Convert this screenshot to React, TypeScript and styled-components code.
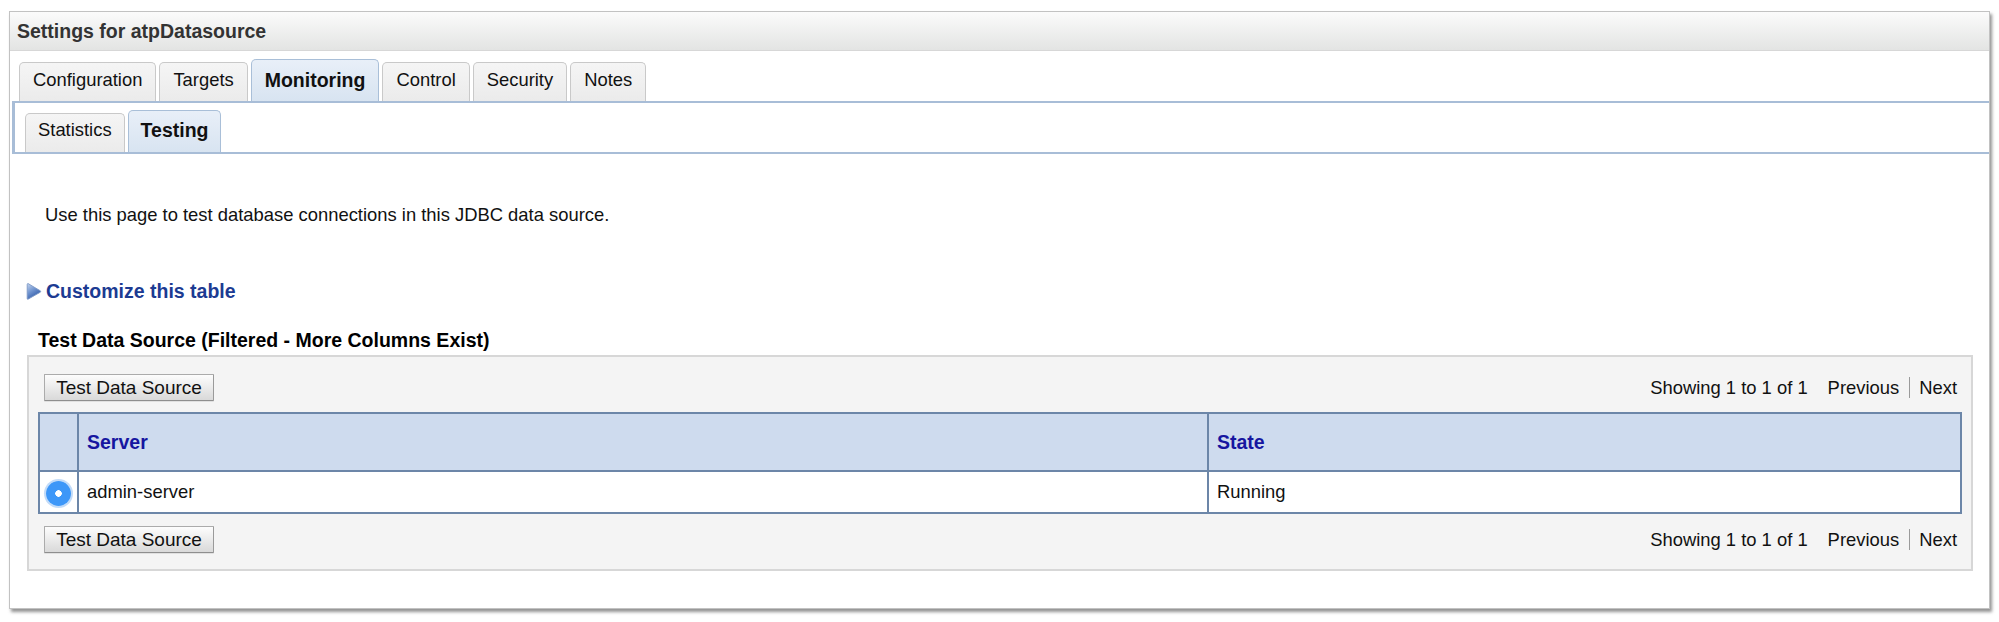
import styled, { createGlobalStyle } from "styled-components";

const GlobalStyle = createGlobalStyle`
  html, body {
    margin: 0;
    padding: 0;
    background: #ffffff;
  }
  body {
    font-family: Tahoma, "Liberation Sans", Arial, sans-serif;
    color: #111;
  }
`;

const Page = styled.div`
  padding: 11px 0 16px 9px;
`;

const Panel = styled.section`
  width: 1981px;
  box-sizing: border-box;
  border: 1px solid #c2c2c2;
  background: #fff;
  box-shadow: 2px 3px 3px rgba(60, 60, 60, 0.55);
  padding-bottom: 37px;
`;

const PanelHeader = styled.header`
  height: 39px;
  box-sizing: border-box;
  display: flex;
  align-items: center;
  padding-left: 7px;
  background: linear-gradient(#fbfbfb, #e3e4e3);
  border-bottom: 1px solid #d7d7d7;
  font-size: 19.5px;
  font-weight: 700;
  color: #333;
`;

const TabRow = styled.div`
  height: 50px;
  display: flex;
  align-items: flex-end;
  gap: 3px;
  padding-left: 9px;
`;

const Tab = styled.div<{ $active?: boolean }>`
  height: ${p => (p.$active ? 42 : 39)}px;
  box-sizing: border-box;
  display: flex;
  align-items: flex-end;
  padding: 0 13px 10px;
  border: 1px solid ${p => (p.$active ? "#a9bfd8" : "#c9c9c9")};
  border-bottom: none;
  border-radius: 5px 5px 0 0;
  background: ${p =>
    p.$active
      ? "linear-gradient(#e8eff8, #d8e4f1)"
      : "linear-gradient(#f5f5f5, #ebebeb)"};
  font-size: ${p => (p.$active ? 19.5 : 18.4)}px;
  font-weight: ${p => (p.$active ? 700 : 400)};
  line-height: 22px;
  color: #111;
  white-space: nowrap;
`;

const SubTab = styled(Tab)`
  padding: 0 12px 11px;
`;

const SubTabBox = styled.div`
  margin-left: 2px;
  height: 53px;
  box-sizing: border-box;
  display: flex;
  align-items: flex-end;
  gap: 3px;
  padding-left: 10px;
  border-top: 2px solid #a8bdd7;
  border-bottom: 2px solid #a8bdd7;
  border-left: 3px solid #a8bdd7;
`;

const Intro = styled.p`
  margin: 50px 0 0 35px;
  font-size: 18.4px;
  line-height: 22px;
  color: #111;
`;

const CustomizeRow = styled.div`
  margin: 54px 0 0 16px;
  height: 22px;
  display: flex;
  align-items: center;
  gap: 4px;
`;

const CustomizeLink = styled.a`
  font-size: 19.5px;
  font-weight: 700;
  line-height: 22px;
  color: #1c3b92;
  text-decoration: none;
  cursor: pointer;
`;

const SectionTitle = styled.h2`
  margin: 27px 0 0 28px;
  font-size: 19.5px;
  font-weight: 700;
  line-height: 22px;
  color: #000;
`;

const TableBox = styled.div`
  margin: 4px 16px 0 17px;
  border: 2px solid #d7d7d7;
  background: #f4f4f4;
  padding: 17px 9px 16px;
`;

const Toolbar = styled.div`
  height: 27px;
  display: flex;
  align-items: center;
  justify-content: space-between;
`;

const Button = styled.button`
  margin-left: 6px;
  width: 170px;
  height: 27px;
  box-sizing: border-box;
  padding: 0;
  border: 1px solid #ababab;
  border-bottom-color: #8e8e8e;
  border-right-color: #9a9a9a;
  border-radius: 1px;
  background: linear-gradient(#fdfdfd, #e9e9e9 55%, #d9d9d9);
  font-family: inherit;
  font-size: 19px;
  line-height: 25px;
  color: #111;
  box-shadow: 0 1px 0 rgba(0, 0, 0, 0.08);
`;

const Pager = styled.div`
  display: flex;
  align-items: center;
  padding-right: 5px;
  font-size: 18.4px;
  line-height: 22px;
  color: #111;
`;

const PagerLink = styled.span`
  cursor: pointer;
`;

const Showing = styled.span`
  margin-right: 20px;
`;

const PagerSep = styled.span`
  width: 1px;
  height: 21px;
  background: #9a9a9a;
  margin: 0 9px 0 10px;
`;

const Table = styled.table`
  width: 100%;
  margin: 11px 0 12px;
  table-layout: fixed;
  border-collapse: separate;
  border-spacing: 0;
  border: 2px solid #6c86a8;
  background: #fff;
`;

const HeadCell = styled.th<{ $first?: boolean }>`
  height: 56px;
  padding: 0 0 0 8px;
  text-align: left;
  background: #cedbee;
  border-bottom: 2px solid #6c86a8;
  border-left: ${p => (p.$first ? "none" : "2px solid #6c86a8")};
  font-size: 19.5px;
  font-weight: 700;
  color: #1616a0;
`;

const Cell = styled.td<{ $first?: boolean }>`
  height: 38px;
  padding: 0 0 0 8px;
  border-left: ${p => (p.$first ? "none" : "2px solid #6c86a8")};
  font-size: 18.4px;
  color: #111;
`;

const RadioCell = styled.td`
  height: 38px;
  padding: 2px 0 0;
  text-align: center;
`;

const Radio = styled.span`
  display: inline-block;
  box-sizing: border-box;
  width: 25px;
  height: 25px;
  border-radius: 50%;
  background: radial-gradient(circle, #ffffff 0 3px, #3d97f8 3.5px);
  box-shadow: 0 0 0 2px rgba(120, 175, 240, 0.45);
  vertical-align: middle;
`;

const DisclosureIcon = () => (
  <svg width="16" height="19" viewBox="0 0 16 19">
    <defs>
      <linearGradient id="tri" x1="0" y1="0" x2="0.6" y2="1">
        <stop offset="0" stopColor="#c4d5ee" />
        <stop offset="0.5" stopColor="#6f93cf" />
        <stop offset="1" stopColor="#2b55a3" />
      </linearGradient>
    </defs>
    <path
      d="M2 1.5 Q1.2 1.5 1.2 2.5 L1.2 16.5 Q1.2 17.5 2 17.2 L14.3 10.2 Q15 9.5 14.3 8.8 Z"
      fill="url(#tri)"
      stroke="#7d98c6"
      strokeWidth="0.9"
    />
  </svg>
);

const Pagination = () => (
  <Pager>
    <Showing>Showing 1 to 1 of 1</Showing>
    <PagerLink>Previous</PagerLink>
    <PagerSep />
    <PagerLink>Next</PagerLink>
  </Pager>
);

export default function App() {
  return (
    <Page>
      <GlobalStyle />
      <Panel>
        <PanelHeader>Settings for atpDatasource</PanelHeader>
        <TabRow>
          <Tab>Configuration</Tab>
          <Tab>Targets</Tab>
          <Tab $active>Monitoring</Tab>
          <Tab>Control</Tab>
          <Tab>Security</Tab>
          <Tab>Notes</Tab>
        </TabRow>
        <SubTabBox>
          <SubTab>Statistics</SubTab>
          <SubTab $active>Testing</SubTab>
        </SubTabBox>

        <Intro>Use this page to test database connections in this JDBC data source.</Intro>

        <CustomizeRow>
          <DisclosureIcon />
          <CustomizeLink>Customize this table</CustomizeLink>
        </CustomizeRow>

        <SectionTitle>Test Data Source (Filtered - More Columns Exist)</SectionTitle>

        <TableBox>
          <Toolbar>
            <Button>Test Data Source</Button>
            <Pagination />
          </Toolbar>
          <Table>
            <colgroup>
              <col style={{ width: 37 }} />
              <col style={{ width: 1130 }} />
              <col />
            </colgroup>
            <thead>
              <tr>
                <HeadCell $first />
                <HeadCell>Server</HeadCell>
                <HeadCell>State</HeadCell>
              </tr>
            </thead>
            <tbody>
              <tr>
                <RadioCell>
                  <Radio />
                </RadioCell>
                <Cell>admin-server</Cell>
                <Cell>Running</Cell>
              </tr>
            </tbody>
          </Table>
          <Toolbar>
            <Button>Test Data Source</Button>
            <Pagination />
          </Toolbar>
        </TableBox>
      </Panel>
    </Page>
  );
}
